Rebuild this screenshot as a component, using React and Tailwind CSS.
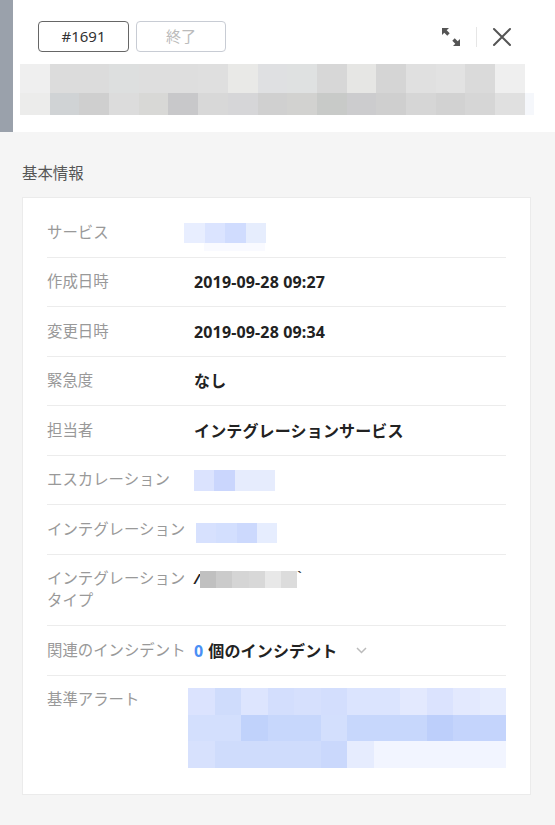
import React from 'react';

const titleRow1 = ['#efefef', '#dcdcdc', '#dcdcdc', '#dddfdf', '#dedede', '#dedede', '#dfdfdf', '#e9e9e7', '#dfe0e2', '#dfe1e1', '#d7d7d7', '#e6e6e4', '#d5d5d5', '#e0e0e0', '#e2e2e2', '#dadada', '#efefef'];
const titleRow2 = ['#ececeb', '#d0d3d5', '#cfcfcf', '#dcdcdc', '#d8d8d6', '#c8c8ca', '#d8d8d8', '#d6d6d8', '#d0d0d0', '#d2d2d0', '#c8cac8', '#ccccce', '#cfcfcf', '#d6d6d6', '#d2d2d2', '#d6d6d6', '#e0e0e0'];

const alertRows = [
  ['#dbe3fe', '#cfdcfc', '#dde5fe', '#d3defd', '#d6e0fd', '#d3defd', '#dbe4fe', '#dbe4fe', '#e3e9fe', '#dbe3fe', '#e3e9fe', '#e6ecfe'],
  ['#d3dffd', '#d3dffd', '#c0d2fb', '#c7d7fc', '#c7d7fc', '#d3dffd', '#c7d7fc', '#c7d7fc', '#c7d7fc', '#bdcffb', '#c4d4fc', '#c4d4fc'],
  ['#d7e1fd', '#cfdcfc', '#cfdcfc', '#cfdcfc', '#cfdcfc', '#cad8fc', '#e6ecfe', '#f2f5ff', '#f2f5ff', '#f2f5ff', '#f2f5ff', '#f2f5ff'],
];

// pixelated strip used for masked values
const Blocks = ({ colors, w, h }) => (
  <div className="flex">
    {colors.map((c, i) => (
      <div key={i} style={{ background: c, width: w, height: h }} />
    ))}
  </div>
);

const Row = ({ label, children, last }) => (
  <div className={`flex pt-[13.5px] leading-[22px] ${last ? '' : 'pb-[13px] border-b border-[#ececec]'}`}>
    <div className="w-[147px] shrink-0 text-[15.4px] text-[#999]">{label}</div>
    <div className="flex-1 font-bold text-[16px] tracking-[0.15px] text-[#222]">{children}</div>
  </div>
);

const ExpandIcon = () => (
  <svg width="20" height="20" viewBox="0 0 20 20" fill="#555">
    <path d="M1 1h7l-2.3 2.3 3 3-2.4 2.4-3-3L1 8z" />
    <path d="M19 19h-7l2.3-2.3-3-3 2.4-2.4 3 3L19 12z" />
  </svg>
);

const CloseIcon = () => (
  <svg width="20" height="20" viewBox="0 0 20 20" stroke="#555" strokeWidth="2" strokeLinecap="round">
    <path d="M2 2l16 16M18 2L2 18" />
  </svg>
);

const App = () => {
  return (
    <div
      className="w-[555px] h-[825px] overflow-hidden bg-[#f5f5f5] text-[15px]"
      style={{ fontFamily: '"Noto Sans", "Noto Sans CJK JP", sans-serif' }}
    >
      {/* Header */}
      <div className="flex h-[132px]">
        <div className="w-[13px] bg-[#9aa1ab]" />
        <div className="flex-1 bg-white pt-[21px]">
          <div className="flex items-center pl-[25px] pr-[43px]">
            <div className="w-[91px] h-[31px] flex items-center justify-center border-[1.5px] border-[#666] rounded-[4px] text-[#333]">
              #1691
            </div>
            <div className="ml-[7px] w-[90px] h-[31px] flex items-center justify-center border-[1.5px] border-[#c8ccd4] rounded-[4px] text-[#bbb]">
              終了
            </div>
            <div className="ml-auto flex items-center">
              <ExpandIcon />
              <div className="mx-[15px] w-px h-[20px] bg-[#e6e6e6]" />
              <CloseIcon />
            </div>
          </div>
          <div className="mt-[12px] pl-[7px]">
            <Blocks colors={titleRow1} w="29.7px" h="29px" />
            <div className="flex">
              <Blocks colors={titleRow2} w="29.7px" h="22px" />
              <div className="w-[9px] h-[22px] bg-[#f5f7fb]" />
            </div>
          </div>
        </div>
      </div>

      {/* Body */}
      <div className="pt-[31px] pl-[22px]">
        <div className="leading-[22px] text-[15.4px] text-[#555]">基本情報</div>
        <div className="mt-[12px] w-[509px] bg-white border border-[#ebebeb] px-[24px] pt-[10px] pb-[26px]">
          <Row label="サービス">
            <div className="h-[22px] -ml-[10px] pt-[1px]">
              <Blocks colors={['#e8eeff', '#dbe4ff', '#d0dcfe', '#e6edfd']} w="20.5px" h="20px" />
              <div className="ml-[20px] w-[61px] h-[8px] bg-[#f9faff]" />
            </div>
          </Row>
          <Row label="作成日時">2019-09-28 09:27</Row>
          <Row label="変更日時">2019-09-28 09:34</Row>
          <Row label="緊急度">なし</Row>
          <Row label="担当者">インテグレーションサービス</Row>
          <Row label="エスカレーション">
            <div className="h-[22px] pt-[1px]">
              <Blocks colors={['#dbe3fe', '#cad6fd', '#e6ecfd', '#e6ecfd']} w="20.3px" h="21px" />
            </div>
          </Row>
          <Row label="インテグレーション">
            <div className="h-[22px] ml-[2px] pt-[4px]">
              <Blocks colors={['#d7e1fe', '#d3dffe', '#ccd9fd', '#e6edfe']} w="20.3px" h="20px" />
            </div>
          </Row>
          <Row label="インテグレーションタイプ">
            <div className="flex items-start">
              <span className="italic text-[14px]">/</span>
              <div className="mt-[3px]">
                <Blocks colors={['#c0c0c0', '#cbcbcb', '#d5d5d5', '#d8d8d8', '#e8e8e8', '#dcdcdc']} w="16.2px" h="17px" />
              </div>
              <span className="text-[#444] text-[12px] leading-[18px]">`</span>
            </div>
          </Row>
          <Row label="関連のインシデント">
            <div className="flex items-center">
              <span className="text-[#4a8ff5]">0</span>
              <span className="ml-[5px]">個のインシデント</span>
              <svg className="ml-[18px]" width="11" height="7" viewBox="0 0 11 7" fill="none" stroke="#bbb" strokeWidth="1.5">
                <path d="M1 1l4.5 4.5L10 1" />
              </svg>
            </div>
          </Row>
          <Row label="基準アラート" last>
            <div className="-ml-[6px] mt-[-1px]">
              {alertRows.map((r, i) => (
                <Blocks key={i} colors={r} w="26.5px" h={i === 2 ? '27px' : '26.5px'} />
              ))}
            </div>
          </Row>
        </div>
      </div>
    </div>
  );
};

export default App;
